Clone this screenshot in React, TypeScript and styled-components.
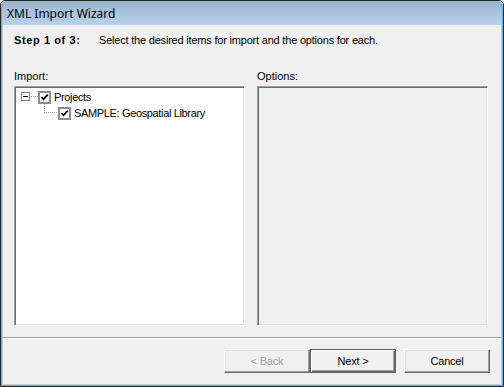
import React from 'react';
import styled, { createGlobalStyle } from 'styled-components';

const GlobalStyle = createGlobalStyle`
  html, body {
    margin: 0;
    padding: 0;
    background: #f0f0f0;
  }
  body {
    font-family: "Liberation Sans", Arial, sans-serif;
    font-size: 11px;
    color: #000;
  }
  * {
    box-sizing: border-box;
  }
`;

const Window = styled.div`
  width: 504px;
  height: 387px;
  border: 1px solid #262626;
  border-radius: 5px 5px 0 0;
  overflow: hidden;
  background: #f0f0f0;
`;

const Frame = styled.div`
  height: 100%;
  display: flex;
  flex-direction: column;
  border: 1px solid #4fb4ea;
  border-top: none;
  border-radius: 4px 4px 0 0;
`;

const TitleBar = styled.div`
  flex: none;
  height: 24px;
  display: flex;
  align-items: center;
  padding-left: 5px;
  background: linear-gradient(#99b4d1, #b9d1ea);
  font-family: "Noto Sans", "Liberation Sans", sans-serif;
  font-size: 12px;
`;

const Body = styled.div`
  flex: 1;
  display: flex;
  flex-direction: column;
  padding: 0 11px;
  border: 1px solid #b9d1ea;
  border-top: none;
`;

const Header = styled.div`
  display: flex;
  margin-top: 7px;
  line-height: 17px;
  letter-spacing: -0.2px;
`;

const StepLabel = styled.span`
  width: 85px;
  font-weight: 700;
  letter-spacing: 0.6px;
`;

const Panels = styled.div`
  display: grid;
  grid-template-columns: 231px 231px;
  column-gap: 12px;
  margin-top: 19px;
`;

const Panel = styled.div`
  display: flex;
  flex-direction: column;
`;

const FieldLabel = styled.div`
  line-height: 16px;
  margin-bottom: 2px;
`;

const Sunken = styled.div<{ $white?: boolean }>`
  height: 240px;
  border: 1px solid;
  border-color: #a0a0a0 #ffffff #ffffff #a0a0a0;
  box-shadow: inset 1px 1px 0 #696969, inset -1px -1px 0 #e3e3e3;
  background: ${(p) => (p.$white ? '#ffffff' : '#f0f0f0')};
  padding: 2px 1px 1px 2px;
`;

const Separator = styled.div`
  margin: 11px -11px 0;
  border-top: 1px solid #a0a0a0;
  border-bottom: 1px solid #ffffff;
`;

const ButtonRow = styled.div`
  display: flex;
  justify-content: flex-end;
  margin-top: 10px;
`;

const Button = styled.button<{ $default?: boolean; $gap?: boolean }>`
  width: 86px;
  height: 24px;
  padding: 0;
  margin-left: ${(p) => (p.$gap ? '8px' : '0')};
  font-family: "Liberation Sans", Arial, sans-serif;
  font-size: 11px;
  letter-spacing: -0.2px;
  color: #000;
  background: #f0f0f0;
  border: 1px solid;
  border-color: ${(p) =>
    p.$default ? '#646464' : '#ffffff #696969 #696969 #ffffff'};
  box-shadow: ${(p) =>
    p.$default
      ? 'inset 1px 1px 0 #ffffff, inset -1px -1px 0 #696969, inset -2px -2px 0 #a0a0a0'
      : 'inset -1px -1px 0 #a0a0a0, inset 1px 1px 0 #e3e3e3'};

  &:disabled {
    color: #a0a0a0;
  }
`;

const TreeRow = styled.div`
  display: flex;
  align-items: center;
  height: 16px;
`;

const Lines = styled.svg`
  flex: none;
  overflow: visible;
  shape-rendering: crispEdges;
`;

const CheckBox = styled.span`
  flex: none;
  width: 13px;
  height: 13px;
  border: 2px solid #8c8c8c;
  background: #ffffff;
  display: flex;
  align-items: center;
  justify-content: center;
`;

const ItemText = styled.span`
  margin-left: 3px;
  line-height: 16px;
  letter-spacing: -0.35px;
  white-space: nowrap;
`;

const Check = () => (
  <svg width="9" height="9" viewBox="0 0 9 9">
    <path d="M1.5 4 L3.5 6.2 L7.8 1.6" fill="none" stroke="#000" strokeWidth="1.7" />
  </svg>
);

type NodeProps = { label: string; level: number };

const TreeNode: React.FC<NodeProps> = ({ label, level }) => (
  <TreeRow>
    {level === 0 ? (
      <Lines width="21" height="16">
        <rect x="4.5" y="3.5" width="8" height="8" fill="#fff" stroke="#808080" />
        <line x1="6" y1="7.5" x2="11" y2="7.5" stroke="#000" />
        <line x1="14" y1="7.5" x2="21" y2="7.5" stroke="#a0a0a0" strokeDasharray="1 1" />
      </Lines>
    ) : (
      <Lines width="41" height="16">
        <line x1="27.5" y1="-1" x2="27.5" y2="8" stroke="#a0a0a0" strokeDasharray="1 1" />
        <line x1="29" y1="7.5" x2="41" y2="7.5" stroke="#a0a0a0" strokeDasharray="1 1" />
      </Lines>
    )}
    <CheckBox>
      <Check />
    </CheckBox>
    <ItemText>{label}</ItemText>
  </TreeRow>
);

const App: React.FC = () => (
  <>
    <GlobalStyle />
    <Window>
      <Frame>
        <TitleBar>XML Import Wizard</TitleBar>
        <Body>
          <Header>
            <StepLabel>Step 1 of 3:</StepLabel>
            <span>Select the desired items for import and the options for each.</span>
          </Header>

          <Panels>
            <Panel>
              <FieldLabel>Import:</FieldLabel>
              <Sunken $white>
                <TreeNode level={0} label="Projects" />
                <TreeNode level={1} label="SAMPLE: Geospatial Library" />
              </Sunken>
            </Panel>
            <Panel>
              <FieldLabel>Options:</FieldLabel>
              <Sunken />
            </Panel>
          </Panels>

          <Separator />

          <ButtonRow>
            <Button disabled>&lt; Back</Button>
            <Button $default>Next &gt;</Button>
            <Button $gap>Cancel</Button>
          </ButtonRow>
        </Body>
      </Frame>
    </Window>
  </>
);

export default App;
